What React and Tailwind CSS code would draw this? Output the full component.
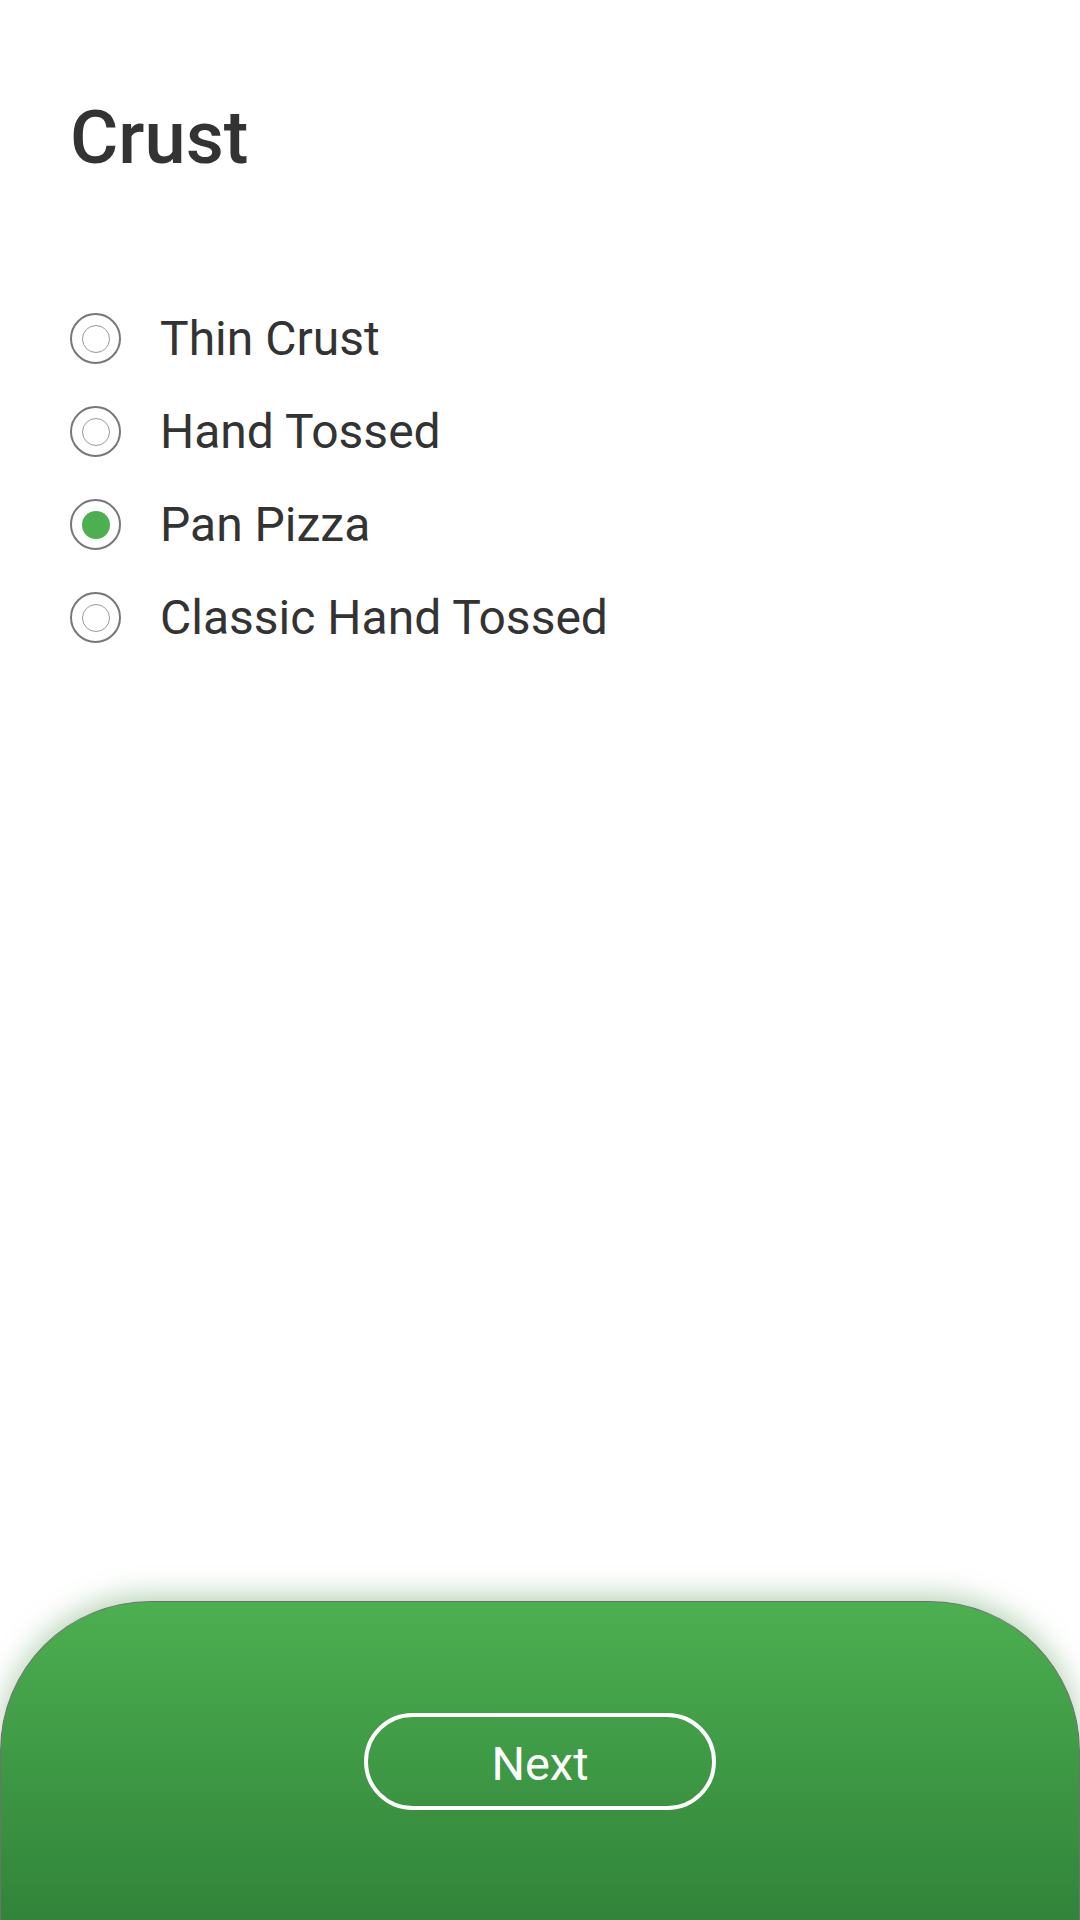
import { useState } from 'react'

const crusts = ['Thin Crust', 'Hand Tossed', 'Pan Pizza', 'Classic Hand Tossed']

function Radio({ checked }) {
  return (
    <span className="w-[51px] h-[51px] rounded-full border-2 border-[#777777] flex items-center justify-center shrink-0">
      {checked ? (
        <span className="w-[28px] h-[28px] rounded-full bg-[#4caf50]" />
      ) : (
        <span className="w-[28px] h-[28px] rounded-full border border-[#9a9a9a]" />
      )}
    </span>
  )
}

export default function App() {
  const [selected, setSelected] = useState('Pan Pizza')

  return (
    <div
      className="w-full h-screen bg-white flex flex-col overflow-hidden"
      style={{ fontFamily: 'Roboto, "Noto Sans", sans-serif' }}
    >
      <div className="px-[70px]">
        <h1 className="pt-[101px] text-[74px] leading-none font-medium text-[#333333]">Crust</h1>

        <div className="mt-[117px] flex flex-col">
          {crusts.map((name) => (
            <button
              key={name}
              onClick={() => setSelected(name)}
              className="h-[93px] flex items-center gap-[39px] text-left"
            >
              <Radio checked={selected === name} />
              <span className="text-[48px] leading-none text-[#333333]">{name}</span>
            </button>
          ))}
        </div>
      </div>

      <div className="flex-1" />

      <div className="h-[319px] rounded-t-[150px] border border-b-0 border-[#707070] bg-gradient-to-b from-[#4caf50] to-[#31843a] shadow-[0_-6px_28px_rgba(46,125,50,0.35)] flex items-center justify-center">
        <button className="w-[352px] h-[97px] rounded-full border-4 border-white text-white text-[47px] leading-none pt-[4px] flex items-center justify-center">
          Next
        </button>
      </div>
    </div>
  )
}
